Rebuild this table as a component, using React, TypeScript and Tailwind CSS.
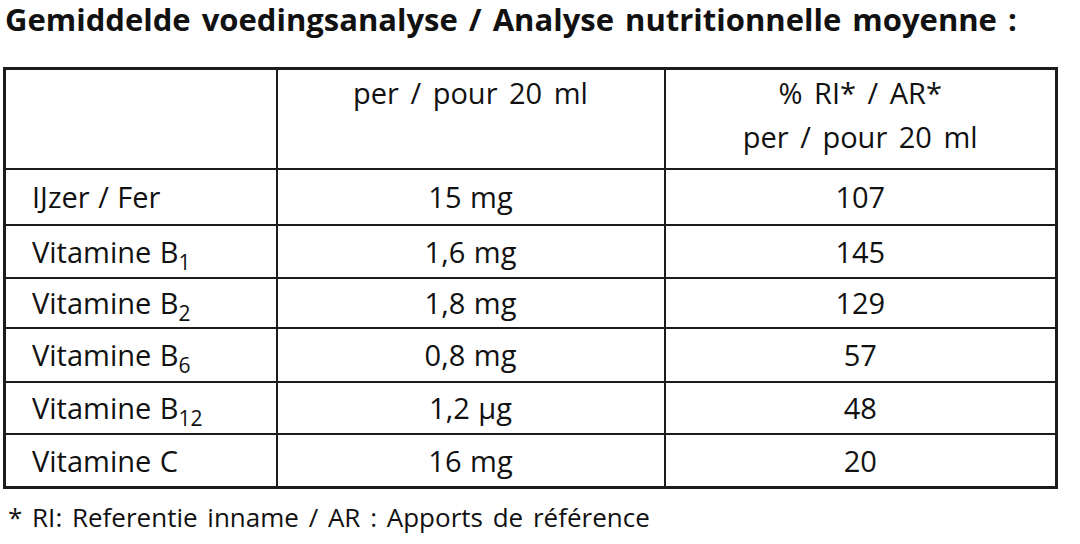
const rows = [
  { name: "IJzer / Fer", sub: "", amount: "15 mg", ri: "107" },
  { name: "Vitamine B", sub: "1", amount: "1,6 mg", ri: "145" },
  { name: "Vitamine B", sub: "2", amount: "1,8 mg", ri: "129" },
  { name: "Vitamine B", sub: "6", amount: "0,8 mg", ri: "57" },
  { name: "Vitamine B", sub: "12", amount: "1,2 µg", ri: "48" },
  { name: "Vitamine C", sub: "", amount: "16 mg", ri: "20" },
];

const rowHeights = ["h-[56px]", "h-[53px]", "h-[50px]", "h-[54px]", "h-[52px]", "h-[54px]"];

export default function App() {
  return (
    <div className="w-[1080px] h-[544px] bg-white text-[#111] font-['Open_Sans',sans-serif] overflow-hidden">
      <h1 className="pl-[5px] text-[31px] leading-[38px] font-bold [word-spacing:3px]">
        Gemiddelde voedingsanalyse / Analyse nutritionnelle moyenne :
      </h1>

      <table className="ml-[3px] mt-[29px] w-[1055px] border-collapse border-[3px] border-[#1c1c1c] text-[29px] [word-spacing:1px]">
        <colgroup>
          <col className="w-[272px]" />
          <col className="w-[388px]" />
          <col />
        </colgroup>
        <thead className="[word-spacing:4px]">
          <tr className="h-[100px]">
            <th className="border-2 border-[#1c1c1c] font-normal" />
            <th className="border-2 border-[#1c1c1c] font-normal align-top leading-[44px] pt-[1px]">
              per / pour 20 ml
            </th>
            <th className="border-2 border-[#1c1c1c] font-normal align-top leading-[44px] pt-[1px]">
              % RI* / AR*
              <br />
              per / pour 20 ml
            </th>
          </tr>
        </thead>
        <tbody>
          {rows.map((r, i) => (
            <tr key={i} className={rowHeights[i]}>
              <td className="border-2 border-[#1c1c1c] pl-[26px] leading-none">
                {r.name}
                {r.sub && (
                  <sub className="text-[21px] relative top-[7px] align-baseline">{r.sub}</sub>
                )}
              </td>
              <td className="border-2 border-[#1c1c1c] text-center leading-none">{r.amount}</td>
              <td className="border-2 border-[#1c1c1c] text-center leading-none">{r.ri}</td>
            </tr>
          ))}
        </tbody>
      </table>

      <p className="pl-[8px] mt-[12px] text-[26px] leading-[32px] [word-spacing:3px]">
        * RI: Referentie inname / AR : Apports de référence
      </p>
    </div>
  );
}
